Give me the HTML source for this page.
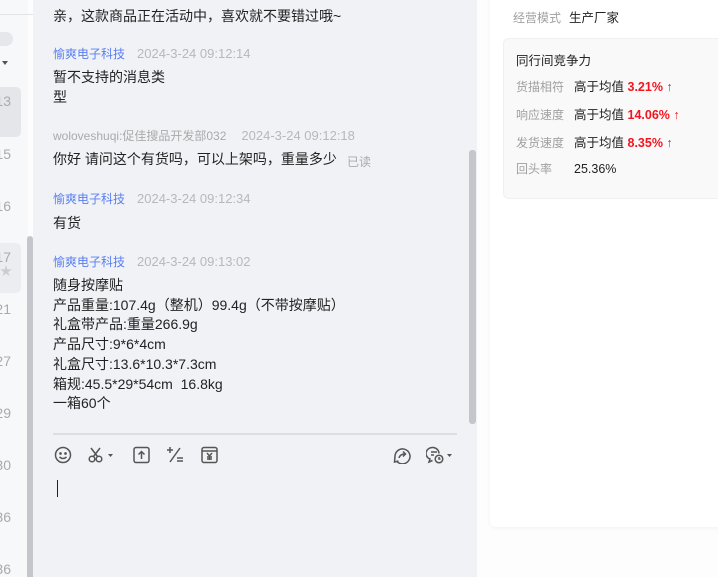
<!DOCTYPE html>
<html><head><meta charset="utf-8"><style>
*{margin:0;padding:0;box-sizing:border-box}
body{width:718px;height:577px;overflow:hidden;position:relative;background:#fdfdfd;font-family:"Liberation Sans","Noto Sans CJK SC",sans-serif;font-size:14px;color:#222}
.a{position:absolute;white-space:nowrap}
#left{position:absolute;left:0;top:0;width:28px;height:577px;background:#f7f8fa}
#chat{position:absolute;left:33px;top:0;width:444px;height:577px;background:#f0f2f6}
.num{position:absolute;width:30px;text-align:right;font-size:14px;color:#aaa;left:-19px}
.nm{color:#5a7ff0;font-size:12px}
.tm{color:#b8b8b8;font-size:13px;margin-left:12px}
.t{font-size:14px;color:#222;line-height:19.7px}
.lab{color:#a0a0a0;font-size:12px}
.val{color:#222;font-size:12.5px}
.red{color:#f5141e;font-weight:bold;font-size:12.5px}
svg{position:absolute}
</style></head><body>
<div id="left">
 <div class="a" style="left:0;top:14px;width:38px;border-top:1px solid #e3e4e7"></div>
 <div class="a" style="left:-6px;top:32px;width:19px;height:14px;background:#e6e7ea;border-radius:7px"></div>
 <div class="a" style="left:2px;top:61px;width:0;height:0;border-left:3px solid transparent;border-right:3px solid transparent;border-top:4px solid #555"></div>
 <div class="a" style="left:0;top:87px;width:21px;height:50px;background:#e4e6ea;border-radius:0 5px 5px 0"></div>
 <div class="a" style="left:0;top:243px;width:21px;height:50px;background:#ecedf0;border-radius:0 5px 5px 0"></div>
 <div class="a" style="left:0;top:262px;color:#ccc;font-size:12px">★</div>
 <div class="num a" style="top:93px">13</div>
 <div class="num a" style="top:146px">15</div>
 <div class="num a" style="top:198px">16</div>
 <div class="num a" style="top:249px">17</div>
 <div class="num a" style="top:301px">21</div>
 <div class="num a" style="top:353px">27</div>
 <div class="num a" style="top:405px">29</div>
 <div class="num a" style="top:457px">30</div>
 <div class="num a" style="top:509px">36</div>
 <div class="num a" style="top:561px">36</div>
</div>
<div class="a" style="left:27px;top:236px;width:6px;height:341px;background:#c4c6cb;border-radius:3px 3px 0 0"></div>
<div id="chat"></div>
<div class="a" style="left:469px;top:150px;width:7px;height:274px;background:#c4c6cb;border-radius:3px"></div>

<div class="a t" style="left:53px;top:7px">亲，这款商品正在活动中，喜欢就不要错过哦~</div>
<div class="a" style="left:53px;top:45px"><span class="nm">愉爽电子科技</span><span class="tm">2024-3-24 09:12:14</span></div>
<div class="a t" style="left:53px;top:68px">暂不支持的消息类<br>型</div>
<div class="a" style="left:53px;top:127px"><span class="nm" style="color:#aaa">woloveshuqi:促佳搜品开发部032</span><span class="tm" style="margin-left:15px">2024-3-24 09:12:18</span></div>
<div class="a t" style="left:53px;top:150px">你好 请问这个有货吗，可以上架吗，重量多少</div>
<div class="a" style="left:347px;top:153px;color:#aaa;font-size:12px">已读</div>
<div class="a" style="left:53px;top:190px"><span class="nm">愉爽电子科技</span><span class="tm">2024-3-24 09:12:34</span></div>
<div class="a t" style="left:53px;top:214px">有货</div>
<div class="a" style="left:53px;top:253px"><span class="nm">愉爽电子科技</span><span class="tm">2024-3-24 09:13:02</span></div>
<div class="a t" style="left:53px;top:276px">随身按摩贴<br>产品重量:107.4g（整机）99.4g（不带按摩贴）<br>礼盒带产品:重量266.9g<br>产品尺寸:9*6*4cm<br>礼盒尺寸:13.6*10.3*7.3cm<br>箱规:45.5*29*54cm&nbsp; 16.8kg<br>一箱60个</div>

<div class="a" style="left:53px;top:433px;width:404px;height:2px;background:#dcdee2"></div>
<svg style="left:54px;top:446px" width="18" height="18" viewBox="0 0 18 18" fill="none" stroke="#555" stroke-width="1.5"><circle cx="9" cy="9" r="7.5"/><circle cx="6.5" cy="7.5" r=".6" fill="#555"/><circle cx="11.5" cy="7.5" r=".6" fill="#555"/><path d="M5.5 11q3.5 3 7 0"/></svg>
<svg style="left:88px;top:446px" width="28" height="18" viewBox="0 0 28 18" fill="none" stroke="#555" stroke-width="1.5"><circle cx="4" cy="13" r="2.8"/><circle cx="11" cy="13" r="2.8"/><path d="M5.5 10.5L12 2M9.5 10.5L3 2"/><path d="M20 8h5l-2.5 3z" fill="#555" stroke="none"/></svg>
<svg style="left:133px;top:446px" width="17" height="18" viewBox="0 0 17 18" fill="none" stroke="#555" stroke-width="1.5"><rect x="1" y="1.5" width="15" height="15" rx="2"/><path d="M8.5 13V6M5.5 8.5l3-3 3 3"/></svg>
<svg style="left:166px;top:446px" width="18" height="18" viewBox="0 0 18 18" fill="none" stroke="#555" stroke-width="1.5"><path d="M1 4h6M4 1v6M14 2L4 16M11 12h6M11 15h6"/></svg>
<svg style="left:201px;top:446px" width="17" height="18" viewBox="0 0 17 18" fill="none" stroke="#555" stroke-width="1.5"><rect x="1" y="1.5" width="15" height="15" rx="2"/><path d="M1 5h15M6 7l2.5 3 2.5-3M8.5 10v4M6 11h5M6 13h5"/></svg>
<svg style="left:393px;top:446px" width="18" height="18" viewBox="0 0 18 18" fill="none" stroke="#555" stroke-width="1.5"><path d="M4 15.5A7.5 7.5 0 1 0 2 10.5"/><path d="M2 10.5L1.5 16l4-1"/><path d="M6 12q1-4 6-4M10 5.5l2.5 2.5-2.5 2.5"/></svg>
<svg style="left:426px;top:446px" width="30" height="19" viewBox="0 0 30 19" fill="none" stroke="#555" stroke-width="1.5"><path d="M13 7.5A6.5 6 0 1 0 4 13l-1 3 3.5-1.5"/><path d="M5 6h6M5 9h3"/><circle cx="13" cy="13" r="3.8"/><path d="M13 11v2h1.5"/><path d="M21 8h5l-2.5 3z" fill="#555" stroke="none"/></svg>
<div class="a" style="left:57px;top:480px;width:1px;height:17px;background:#222"></div>

<div class="a" style="left:490px;top:-10px;width:240px;height:537px;background:#fff;border-radius:6px;box-shadow:0 1px 4px rgba(0,0,0,.05)"></div>
<div class="a" style="left:513px;top:7px"><span class="lab">经营模式</span><span class="val" style="margin-left:8px">生产厂家</span></div>
<div class="a" style="left:503px;top:38px;width:230px;height:161px;background:#f9f9fa;border:1px solid #f0f0f2;border-radius:6px"></div>
<div class="a val" style="left:516px;top:50px">同行间竞争力</div>
<div class="a" style="left:516px;top:76px"><span class="lab">货描相符</span><span class="val" style="margin-left:10px">高于均值 </span><span class="red">3.21% ↑</span></div>
<div class="a" style="left:516px;top:104px"><span class="lab">响应速度</span><span class="val" style="margin-left:10px">高于均值 </span><span class="red">14.06% ↑</span></div>
<div class="a" style="left:516px;top:132px"><span class="lab">发货速度</span><span class="val" style="margin-left:10px">高于均值 </span><span class="red">8.35% ↑</span></div>
<div class="a" style="left:516px;top:160px"><span class="lab">回头率</span><span class="val" style="margin-left:22px">25.36%</span></div>
</body></html>
